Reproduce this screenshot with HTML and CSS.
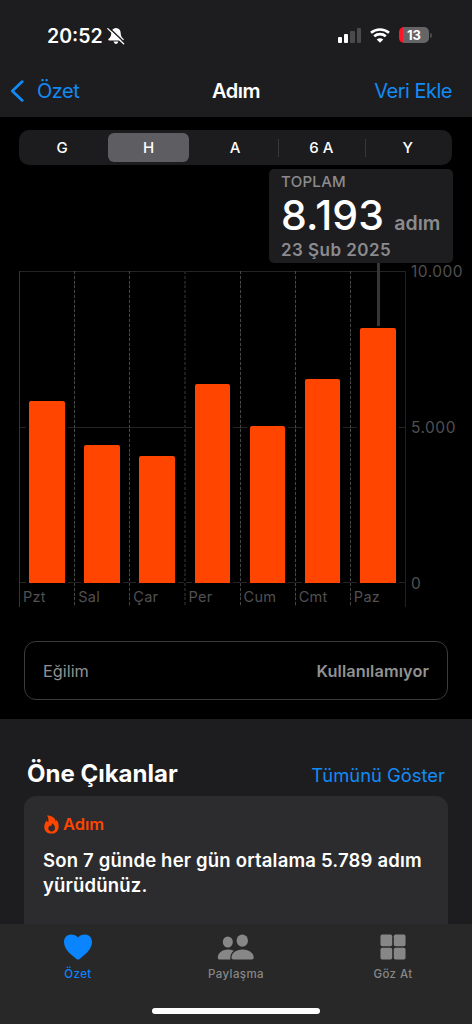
FILE: index.html
```html
<!DOCTYPE html>
<html lang="tr">
<head>
<meta charset="utf-8">
<title>Adım</title>
<link rel="stylesheet" href="styles.css">
</head>
<body>
<div class="screen">
  <header class="header">
    <div class="status">
      <div class="status-left">
        <span class="clock">20:52</span>
        <svg class="bell" width="18" height="18" viewBox="0 0 18 18">
          <path d="M9 1C6 1 4.400 3.200 4.300 6.200C4.200 9.500 3 10.500 1.600 11.800C1 12.500 1.200 13.500 2.200 13.500H15.800C16.800 13.500 17 12.500 16.400 11.800C15 10.500 13.800 9.500 13.700 6.200C13.600 3.200 12 1 9 1ZM6.600 14.600H11.400C11 16.300 10 17 9 17S7 16.300 6.600 14.600Z" fill="#fff"/>
          <path d="M2 .8L18 16" stroke="#1d1d1f" stroke-width="1.500"/>
          <path d="M0.800 1.600L16.600 16.800" stroke="#fff" stroke-width="1.300" stroke-linecap="round"/>
        </svg>
      </div>
      <div class="status-right">
        <div class="signal"><i class="b1"></i><i class="b2"></i><i class="b3"></i><i class="b4"></i></div>
        <svg class="wifi" width="20" height="15" viewBox="0 0 20 15">
          <path d="M1 4.800C6.200 .3 13.800 .3 19 4.800M4.200 8.300C7.500 5.400 12.500 5.400 15.800 8.300" fill="none" stroke="#fff" stroke-width="2.600"/>
          <path d="M10 14.800L6.700 11.500C8.600 9.900 11.400 9.900 13.300 11.500Z" fill="#fff"/>
        </svg>
        <div class="battery"><span class="level">13</span><i class="nub"></i></div>
      </div>
    </div>
    <nav class="nav">
      <a class="back"><svg width="14" height="22" viewBox="0 0 14 22"><path d="M12.300 1.600L2.300 11L12.300 20.400" fill="none" stroke="#128bf5" stroke-width="2.700" stroke-linecap="round" stroke-linejoin="round"/></svg><span>Özet</span></a>
      <h1 class="title">Adım</h1>
      <a class="add">Veri Ekle</a>
    </nav>
  </header>

  <main class="steps">
    <div class="segments">
      <span class="segment">G</span>
      <span class="segment active">H</span>
      <span class="segment">A</span>
      <span class="segment divided">6 A</span>
      <span class="segment divided">Y</span>
    </div>

    <div class="chart">
      <div class="plot">
        <div class="day first"><div class="track"><div class="bar" style="height:182px"></div></div><span class="label">Pzt</span></div>
        <div class="day"><div class="track"><div class="bar" style="height:138px"></div></div><span class="label">Sal</span></div>
        <div class="day"><div class="track"><div class="bar" style="height:127px"></div></div><span class="label">Çar</span></div>
        <div class="day faint"><div class="track"><div class="bar" style="height:199px"></div></div><span class="label">Per</span></div>
        <div class="day"><div class="track"><div class="bar" style="height:157px"></div></div><span class="label">Cum</span></div>
        <div class="day"><div class="track"><div class="bar" style="height:204px"></div></div><span class="label">Cmt</span></div>
        <div class="day"><div class="track"><div class="bar" style="height:255px"></div></div><span class="label">Paz</span></div>
      </div>
      <div class="axis"><span>10.000</span><span>5.000</span><span>0</span></div>
      <div class="callout-line"></div>
      <div class="callout">
        <div class="callout-label">TOPLAM</div>
        <div class="callout-value"><span class="number">8.193</span><span class="unit">adım</span></div>
        <div class="callout-date">23 Şub 2025</div>
      </div>
    </div>

    <div class="trend"><span class="trend-name">Eğilim</span><span class="trend-value">Kullanılamıyor</span></div>
  </main>

  <section class="highlights">
    <div class="highlights-head"><h2 class="heading">Öne Çıkanlar</h2><a class="show-all">Tümünü Göster</a></div>
    <article class="card">
      <div class="card-topic">
        <svg width="15" height="19" viewBox="0 0 15 19"><path fill-rule="evenodd" d="M3 .6C7.500 .6 11.400 2.800 11.700 6.400C12.200 6 12.400 5.400 12.500 4.800C14 6.500 14.700 8.900 14.700 11.200C14.700 15.800 11.700 18.600 7.500 18.600C3.200 18.600 .3 15.900 .3 11.900C.3 9.300 1.500 7 2.800 5.600C3.100 6.400 3.600 7 4.200 7.200C4.800 4.900 4.500 2.500 3 .6ZM8 8.300C8.100 10.300 7 10.700 6.300 11.200C5.900 11 5.700 10.700 5.600 10.400C4.700 11.300 4.300 12.300 4.300 13.300C4.300 15.200 5.700 16.400 7.600 16.400C9.600 16.400 11 15.100 11 13C11 10.900 9.800 9.200 8 8.300Z" fill="#ff4500"/></svg>
        <span>Adım</span>
      </div>
      <p class="card-text">Son 7 günde her gün ortalama 5.789 adım yürüdünüz.</p>
    </article>
  </section>

  <footer class="tabs">
    <a class="tab selected"><svg width="28" height="26" viewBox="0 0 28 26"><path d="M14 25.500C13.300 25.500 12.300 24.800 11.200 23.900C5 19.200 0 14 0 8C0 3.500 3 .5 7 .5C10 .5 12.500 1.600 14 3.500C15.500 1.600 18 .5 21 .5C25 .5 28 3.500 28 8C28 14 23 19.200 16.800 23.900C15.700 24.800 14.700 25.500 14 25.500Z" fill="#0a84ff"/></svg><span>Özet</span></a>
    <a class="tab"><svg width="38" height="26" viewBox="0 0 38 26"><g fill="#878787"><ellipse cx="10.800" cy="8" rx="5" ry="5.500"/><ellipse cx="25.300" cy="6.600" rx="5.700" ry="6.200"/><path d="M2.500 25.500C1 25.500 .8 24.600 .8 23.800C.8 19.300 4.800 15.600 10.800 15.600C13 15.600 15 16 16.800 16.800C14 18.900 13 21.500 13.400 25.500Z"/><path d="M16.500 25.500C14.900 25.500 14.500 24.700 14.500 23.600C14.500 19.200 18.600 15.400 25.600 15.400S36.700 19.200 36.700 23.600C36.700 24.700 36.300 25.500 34.700 25.500Z"/></g></svg><span>Paylaşma</span></a>
    <a class="tab"><svg width="26" height="26" viewBox="0 0 26 26"><g fill="#878787"><rect x=".5" y=".5" width="11.700" height="11.700" rx="1.700"/><rect x="13.800" y=".5" width="11.700" height="11.700" rx="1.700"/><rect x=".5" y="13.800" width="11.700" height="11.700" rx="1.700"/><rect x="13.800" y="13.800" width="11.700" height="11.700" rx="1.700"/></g></svg><span>Göz At</span></a>
    <div class="home-bar"></div>
  </footer>
</div>
</body>
</html>
```
FILE: styles.css
```css
* { box-sizing: border-box; }
body { margin: 0; background: #000; font-family: Inter, "Liberation Sans", sans-serif; color: #fff; }
h1, h2, p { margin: 0; }
.screen { width: 472px; height: 1024px; display: flex; flex-direction: column; overflow: hidden; white-space: nowrap; }

.header { height: 117px; flex: none; background: #1d1d1f; }
.status { height: 66px; padding: 24px 40px 0 47px; display: flex; justify-content: space-between; }
.status-left { display: flex; gap: 4px; height: 23px; align-items: center; }
.clock { font-size: 19.500px; font-weight: 600; }
.status-right { display: flex; height: 22px; align-items: center; }
.signal { display: flex; align-items: flex-end; gap: 2px; height: 15px; margin-right: 9px; }
.signal i { width: 4.300px; border-radius: 1px; background: #4a4a4c; }
.signal .b1 { height: 6px; background: #fff; }
.signal .b2 { height: 9px; background: #fff; }
.signal .b3 { height: 12px; }
.signal .b4 { height: 15px; }
.wifi { margin-right: 9px; }
.battery { display: flex; align-items: center; gap: 1px; }
.level { width: 30px; height: 16px; border-radius: 5px; background: linear-gradient(90deg, #ff1526 4px, #656567 4px); font-size: 13px; line-height: 16px; font-weight: 700; text-align: center; }
.nub { width: 2px; height: 5px; border-radius: 0 2px 2px 0; background: #4a4a4c; }
.nav { display: grid; grid-template-columns: 1fr auto 1fr; align-items: center; height: 50px; padding: 0 20px 0 10px; font-size: 20px; line-height: 24px; }
.back { display: flex; align-items: center; gap: 13px; color: #128bf5; letter-spacing: -.5px; }
.title { font-size: 20px; font-weight: 600; margin-left: 10px; letter-spacing: -.5px; }
.add { color: #128bf5; text-align: right; letter-spacing: -.5px; }

.steps { height: 602px; flex: none; padding: 13px 19px 0; background: #000; }
.segments { display: grid; grid-template-columns: repeat(5, 1fr); width: 433px; height: 35px; padding: 3px 1px 3px 0; border-radius: 10px; background: #1c1c1e; }
.segment { display: flex; align-items: center; justify-content: center; font-size: 15px; font-weight: 500; }
.active { margin: 0 3px; border-radius: 6px; background: #5e5e62; }
.divided { background: linear-gradient(#38383a, #38383a) 0 50% / 1px 18px no-repeat; }

.chart { position: relative; display: flex; height: 442px; padding-top: 106px; }
.plot { flex: none; display: grid; grid-template-columns: repeat(7, 1fr); width: 387px; height: 336px; border-right: 1px solid #202020; background: linear-gradient(#242424, #242424) 0 0 / 100% 1px no-repeat, linear-gradient(#242424, #242424) 0 156px / 100% 1px no-repeat, linear-gradient(#242424, #242424) 0 311px / 100% 1px no-repeat; }
.day { height: 336px; background: repeating-linear-gradient(#464646 0 3px, #0c0c0c 3px 4.800px) 0 0 / 1px 100% no-repeat; }
.day.first { background: linear-gradient(#353535, #353535) 0 0 / 1px 100% no-repeat; }
.day.faint { background: repeating-linear-gradient(#1d1d1d 0 3px, #000 3px 4.800px) 0 0 / 2px 100% no-repeat; }
.track { display: flex; align-items: flex-end; height: 312px; padding-left: 10.200px; }
.bar { width: 35.500px; border-radius: 2px 2px 0 0; background: #ff4500; box-shadow: 3px 0 #000, -3px 0 #000; }
.label { display: block; padding-left: 4px; font-size: 14.500px; line-height: 27px; color: #505052; letter-spacing: .3px; }
.axis { flex: none; display: flex; flex-direction: column; justify-content: space-between; height: 332px; margin: -9px 0 0 5px; font-size: 15.500px; line-height: 20px; color: #505052; letter-spacing: .5px; }
.callout-line { position: absolute; left: 358px; top: 96px; width: 3px; height: 65px; background: #363638; }
.callout { position: absolute; left: 250px; top: 4px; width: 184px; height: 94px; padding: 3px 12px; border-radius: 5px; background: #1d1d1f; color: #8b8b8f; font-weight: 600; }
.callout-label { font-size: 15px; font-weight: 500; line-height: 19px; letter-spacing: .3px; }
.callout-value { display: flex; align-items: baseline; gap: 10px; height: 49px; line-height: 49px; }
.number { font-size: 41px; font-weight: 500; color: #fff; letter-spacing: .2px; }
.unit { font-size: 19.500px; }
.callout-date { font-size: 17px; line-height: 21px; letter-spacing: .45px; }

.trend { display: flex; justify-content: space-between; align-items: center; width: 424px; height: 59px; margin: 34px 0 0 5px; padding: 0 18px; border: 1px solid #3b3b3b; border-radius: 12px; font-size: 16.300px; color: #929292; }
.trend-value { font-weight: 600; letter-spacing: .1px; }

.highlights { height: 205px; flex: none; padding: 37px 24px 0; background: #1d1d1f; }
.highlights-head { display: flex; justify-content: space-between; align-items: baseline; height: 40px; padding: 1px 3px 0; }
.heading { font-size: 24px; line-height: 34px; font-weight: 700; }
.show-all { font-size: 18.400px; color: #128bf5; }
.card { height: 128px; padding: 18px 19px 0; border-radius: 12px 12px 0 0; background: #2c2c2e; }
.card-topic { display: flex; align-items: center; gap: 4px; height: 20px; padding-left: 1px; font-size: 16.500px; font-weight: 600; color: #ff4500; }
.card-text { margin-top: 14px; font-size: 18.500px; line-height: 25px; font-weight: 600; letter-spacing: .18px; white-space: normal; }

.tabs { position: relative; display: grid; grid-template-columns: 156px 160px 154px; height: 100px; padding-top: 10px; background: #282828; }
.tab { display: flex; flex-direction: column; align-items: center; gap: 6px; font-size: 11.500px; line-height: 16px; font-weight: 500; letter-spacing: .4px; color: #878787; }
.selected { color: #0a84ff; }
.home-bar { position: absolute; left: 152px; top: 84px; width: 168px; height: 6px; border-radius: 3px; background: #fff; }
```
